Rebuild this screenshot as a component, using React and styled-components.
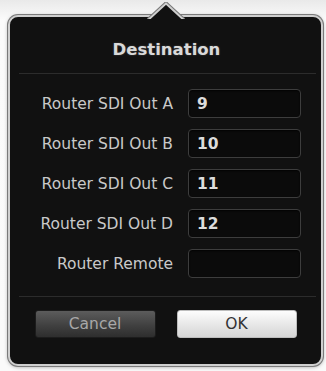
import styled, { createGlobalStyle } from "styled-components"

const Global = createGlobalStyle`
  html, body {
    margin: 0;
    background: #f7f7f7;
  }
  body {
    font-family: "DejaVu Sans", "Liberation Sans", sans-serif;
  }
`;

const Page = styled.div`
  width: 326px;
  height: 371px;
  padding: 15px 4px 4px 8px;
  box-sizing: border-box;
  background: linear-gradient(#e9e9e9, #fbfbfb 20px, #fafafa);
`;

const Popover = styled.div`
  position: relative;
  width: 315px;
  height: 351px;
  box-sizing: border-box;
  border: 2px solid #cfcfcf;
  border-radius: 10px;
  background: #111111;
  box-shadow: 0 0 0 1px #7a7a7a, 0 1px 4px rgba(0, 0, 0, 0.35);
  display: flex;
  flex-direction: column;
`;

const Arrow = styled.svg`
  position: absolute;
  top: -15px;
  left: 137px;
`;

const Title = styled.h1`
  margin: 0;
  height: 56px;
  box-sizing: border-box;
  padding: 8px 0 0 2px;
  display: flex;
  align-items: center;
  justify-content: center;
  font-size: 16.5px;
  font-weight: 700;
  color: #d9d9d9;
  text-shadow: 0 0 2px rgba(255, 255, 255, 0.25);
`;

const Divider = styled.div`
  height: 1px;
  margin: 0 5px 0 9px;
  background: #2c2c2c;
`;

const Form = styled.div`
  display: grid;
  grid-template-columns: 1fr 113px;
  grid-auto-rows: 29px;
  column-gap: 15px;
  row-gap: 11px;
  padding: 15px 20px 18px 10px;
`;

const Label = styled.label`
  display: flex;
  align-items: center;
  justify-content: flex-end;
  font-size: 15.5px;
  color: #c9c9c9;
  white-space: nowrap;
`;

const Field = styled.div`
  display: flex;
  align-items: center;
  box-sizing: border-box;
  padding-left: 8px;
  border: 1.5px solid #3d3d3d;
  border-radius: 4px;
  background: #0b0b0b;
  box-shadow: inset 0 1px 2px rgba(0, 0, 0, 0.8);
  font-size: 15.5px;
  font-weight: 700;
  color: #dcdcdc;
`;

const Buttons = styled.div`
  display: grid;
  grid-template-columns: 121px 120px;
  column-gap: 21px;
  justify-content: center;
  padding-top: 13px;
`;

const Button = styled.div`
  height: 28px;
  display: flex;
  align-items: center;
  justify-content: center;
  border-radius: 3px;
  font-size: 15.5px;
  color: ${props => (props.primary ? "#333333" : "#a8a8a8")};
  background: ${props =>
    props.primary
      ? "linear-gradient(#fdfdfd, #e4e4e4 60%, #d6d6d6)"
      : "linear-gradient(#5c5c5c, #3e3e3e 60%, #2e2e2e)"};
  border: 1px solid ${props => (props.primary ? "#bdbdbd" : "#1c1c1c")};
  box-sizing: border-box;
`;

const rows = [
  ["Router SDI Out A", "9"],
  ["Router SDI Out B", "10"],
  ["Router SDI Out C", "11"],
  ["Router SDI Out D", "12"],
  ["Router Remote", ""],
];

export default function App() {
  return (
    <Page>
      <Global />
      <Popover>
        <Arrow width="38" height="20" viewBox="0 0 38 20">
          <path d="M0 19 L19 1.5 L38 19" fill="#111111" stroke="#7a7a7a" strokeWidth="4" />
          <path d="M0 19 L19 1.5 L38 19" fill="#111111" stroke="#cfcfcf" strokeWidth="2" />
          <rect x="0" y="17" width="38" height="3" fill="#111111" />
        </Arrow>
        <Title>Destination</Title>
        <Divider />
        <Form>
          {rows.map(([label, value]) => [
            <Label key={label}>{label}</Label>,
            <Field key={label + "-field"}>{value}</Field>,
          ])}
        </Form>
        <Divider />
        <Buttons>
          <Button>Cancel</Button>
          <Button primary>OK</Button>
        </Buttons>
      </Popover>
    </Page>
  );
}
